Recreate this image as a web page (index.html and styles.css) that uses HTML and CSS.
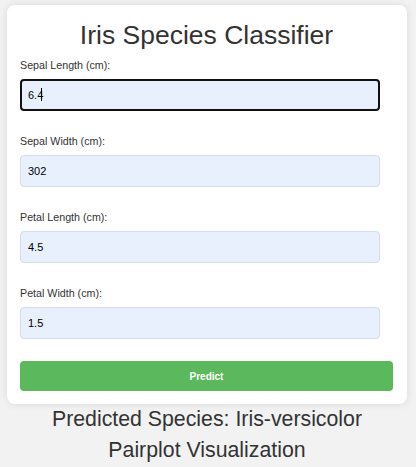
FILE: index.html
```html
<!DOCTYPE html>
<html lang="en">
<head>
<meta charset="utf-8">
<title>Iris Species Classifier</title>
<link rel="stylesheet" href="styles.css">
</head>
<body>
<main class="page">
  <form class="card">
    <h1 class="title">Iris Species Classifier</h1>
    <div class="field">
      <label class="label" for="sl">Sepal Length (cm):</label>
      <div class="input-wrap">
        <input class="input focused" id="sl" type="text" value="6.4">
        <span class="caret"></span>
      </div>
    </div>
    <div class="field">
      <label class="label" for="sw">Sepal Width (cm):</label>
      <input class="input" id="sw" type="text" value="302">
    </div>
    <div class="field">
      <label class="label" for="pl">Petal Length (cm):</label>
      <input class="input" id="pl" type="text" value="4.5">
    </div>
    <div class="field">
      <label class="label" for="pw">Petal Width (cm):</label>
      <input class="input" id="pw" type="text" value="1.5">
    </div>
    <button class="btn" type="button">Predict</button>
  </form>
  <h2 class="result">Predicted Species: Iris-versicolor</h2>
  <h2 class="result">Pairplot Visualization</h2>
</main>
</body>
</html>
```

FILE: styles.css
```css
html, body {
  margin: 0;
  padding: 0;
}
body {
  background: #f2f2f2;
  font-family: "Liberation Sans", Arial, sans-serif;
  color: #333;
}
.page {
  padding: 5px 9px 0 7px;
}
.card {
  background: #fff;
  border-radius: 8px;
  box-shadow: 0 0 8px rgba(0, 0, 0, 0.1);
  padding: 14px 14px 13px 13px;
  display: flex;
  flex-direction: column;
}
.title {
  margin: 0 0 8px;
  font-size: 26.5px;
  font-weight: normal;
  line-height: 32px;
  text-align: center;
  color: #333;
}
.field {
  display: flex;
  flex-direction: column;
  align-items: flex-start;
  margin-bottom: 24px;
}
.label {
  font-size: 10.7px;
  line-height: 13px;
  margin-bottom: 7px;
  color: #333;
}
.input-wrap {
  position: relative;
}
.input {
  box-sizing: border-box;
  width: 360px;
  height: 32px;
  margin: 0;
  padding: 0 7px;
  border: 1px solid #d6dde8;
  border-radius: 4px;
  background: #e8f0fe;
  font-family: "Liberation Sans", Arial, sans-serif;
  font-size: 11px;
  color: #000;
  outline: none;
}
.input.focused {
  border: 2px solid #111;
  padding: 0 6px;
}
.caret {
  position: absolute;
  left: 21px;
  top: 9px;
  width: 1px;
  height: 13px;
  background: #000;
}
.btn {
  margin-top: -2px;
  height: 30px;
  border: none;
  border-radius: 4px;
  background: #5cb85c;
  color: #fff;
  font-family: "Liberation Sans", Arial, sans-serif;
  font-size: 10px;
  font-weight: bold;
}
.result {
  margin: 0;
  font-size: 21.3px;
  font-weight: normal;
  line-height: 31px;
  text-align: center;
  color: #333;
}
```
